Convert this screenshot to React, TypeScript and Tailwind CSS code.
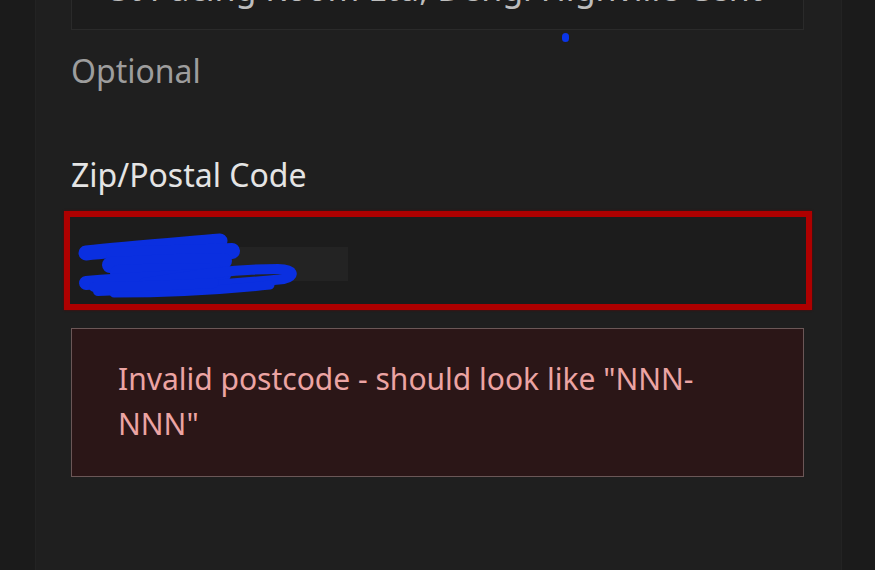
import React from "react";

export default function App() {
  return (
    <div
      className="relative w-[875px] h-[570px] overflow-hidden bg-[#1b1b1b]"
      style={{ fontFamily: '"Noto Sans", "Open Sans", sans-serif' }}
    >
      <div className="ml-[35px] w-[807px] h-full flex flex-col bg-[#1f1f1f] border-x border-[#232323] pl-[35px] pr-[37px]">
        {/* top input (cut off) */}
        <div className="-mt-[50px] h-[80px] shrink-0 border border-[#2a2a2a] bg-[#1c1c1c] pl-[38px] pt-[22px] overflow-hidden">
          <div className="text-[34px] leading-[30px] text-[#bdbdbd] whitespace-nowrap">
            St Pacing Room Ltd, Dengi Highville Cent
          </div>
        </div>

        <p className="mt-[21px] text-[32px] leading-[40px] text-[#9d9d9d]">Optional</p>

        <p className="mt-[64px] text-[32px] leading-[40px] text-[#e4e4e4]">Zip/Postal Code</p>

        <div className="mt-[16px] -ml-[7px] -mr-[8px] h-[99px] shrink-0 border-[6px] border-[#ae0000] bg-[#1c1c1c] shadow-[0_0_2px_#600000]">
          <div className="relative w-full h-full">
            <div className="absolute left-[130px] top-[30px] w-[148px] h-[34px] bg-[#232323]" />
            <svg
              className="absolute left-[4px] top-[12px]"
              width="228"
              height="76"
              viewBox="0 0 228 76"
            >
              <g
                fill="none"
                stroke="#0a2fe0"
                strokeLinecap="round"
                strokeLinejoin="round"
              >
                <path d="M12 24 C50 20 100 16 146 12" strokeWidth="15" />
                <path d="M40 26 C80 24 120 24 158 22" strokeWidth="16" />
                <path d="M36 36 C80 34 110 32 150 32" strokeWidth="16" />
                <path d="M44 44 C80 42 110 42 140 42" strokeWidth="16" />
                <path d="M12 54 C60 50 100 48 150 46" strokeWidth="14" />
                <path
                  d="M24 62 C80 60 150 56 210 50 C222 47 220 40 204 40 C160 40 120 46 70 54"
                  strokeWidth="10"
                />
                <path d="M40 64 C90 64 140 62 196 56" strokeWidth="9" />
                <path d="M20 58 C60 58 100 56 140 54" strokeWidth="10" />
              </g>
            </svg>
          </div>
        </div>

        <div className="mt-[18px] h-[149px] shrink-0 border-[1.5px] border-[#6b5757] bg-[#2b1617] pl-[46px] pr-[42px] pt-[27px]">
          <p className="text-[30px] leading-[45px] text-[#eca4a3]">
            Invalid postcode - should look like "NNN-NNN"
          </p>
        </div>
      </div>

      <div className="absolute left-[562px] top-[33px] w-[7px] h-[9px] rounded-full bg-[#0a35e8]" />
    </div>
  );
}
